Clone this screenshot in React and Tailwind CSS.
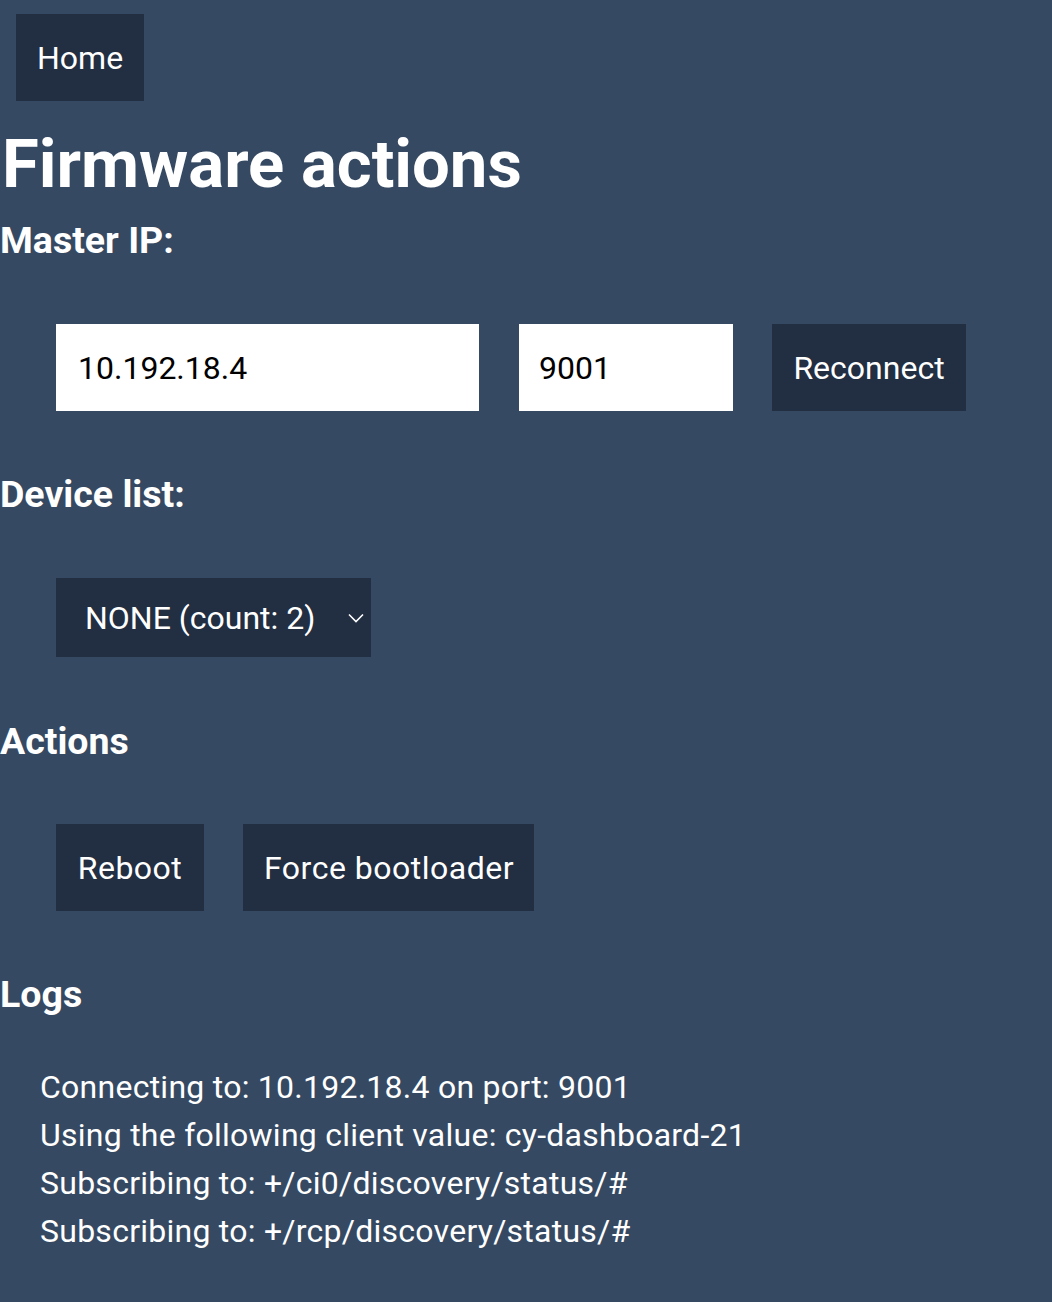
import { useState } from 'react';

const logs = [
  'Connecting to: 10.192.18.4 on port: 9001',
  'Using the following client value: cy-dashboard-21',
  'Subscribing to: +/ci0/discovery/status/#',
  'Subscribing to: +/rcp/discovery/status/#',
];

function DarkButton({ children, className = '' }) {
  return (
    <button className={`h-[87px] px-[21px] whitespace-nowrap bg-[#222e42] text-white text-[32px] leading-none ${className}`}>
      {children}
    </button>
  );
}

export default function App() {
  const [ip, setIp] = useState('10.192.18.4');
  const [port, setPort] = useState('9001');

  return (
    <div className="min-h-screen bg-[#364962] text-white font-['Roboto',sans-serif] text-[32px] pt-[14px] pb-10">
      <nav className="pl-4">
        <a href="#" className="inline-flex items-center h-[87px] px-[21px] bg-[#222e42] text-white">
          Home
        </a>
      </nav>

      <h1 className="mt-[27px] h-[72px] leading-[72px] text-[67px] font-bold pl-[2px]">Firmware actions</h1>

      <h3 className="mt-5 h-10 leading-10 text-[37.5px] font-bold">Master IP:</h3>
      <div className="mt-16 pl-14 flex gap-10">
        <input
          value={ip}
          onChange={(e) => setIp(e.target.value)}
          className="w-[423px] h-[87px] px-[22px] bg-white text-black outline-none"
        />
        <input
          value={port}
          onChange={(e) => setPort(e.target.value)}
          className="w-[214px] h-[87px] px-5 bg-white text-black outline-none"
        />
        <DarkButton className="w-[194px] -ml-px">Reconnect</DarkButton>
      </div>

      <h3 className="mt-[63px] h-10 leading-10 text-[37.5px] font-bold">Device list:</h3>
      <div className="mt-16 pl-14">
        <div className="relative inline-block">
          <select className="appearance-none w-[315px] h-[79px] pl-[29px] pr-12 bg-[#222e42] text-white outline-none">
            <option>NONE (count: 2)</option>
          </select>
          <svg
            className="absolute right-[6px] top-[35px] pointer-events-none"
            width="18"
            height="10"
            viewBox="0 0 18 10"
            fill="none"
            stroke="white"
            strokeWidth="1.6"
          >
            <path d="M2 1.5 9 8.5 16 1.5" />
          </svg>
        </div>
      </div>

      <h3 className="mt-16 h-10 leading-10 text-[37.5px] font-bold">Actions</h3>
      <div className="mt-[63px] pl-14 flex gap-[39px]">
        <DarkButton className="w-[148px] tracking-[0.5px]">Reboot</DarkButton>
        <DarkButton className="w-[291px] px-0 tracking-[0.5px]">Force bootloader</DarkButton>
      </div>

      <h3 className="mt-[63px] h-10 leading-10 text-[37.5px] font-bold">Logs</h3>
      <div className="mt-[49px] pl-10 leading-[48px] tracking-[0.25px]">
        {logs.map((line, i) => (
          <div key={i}>{line}</div>
        ))}
      </div>
    </div>
  );
}
